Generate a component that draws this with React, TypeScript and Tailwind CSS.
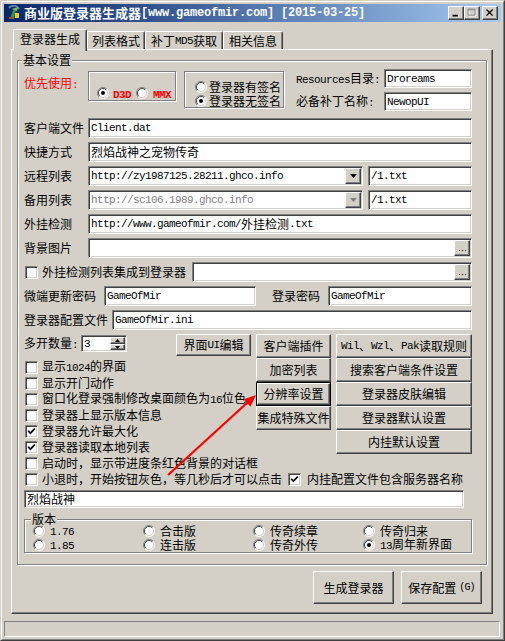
import React from 'react';

// classic win2000 bevels
const SUNK =
  "bg-white border border-t-[#808080] border-l-[#808080] border-b-white border-r-white shadow-[inset_1px_1px_0_#404040,inset_-1px_-1px_0_#d4d0c8]";
const RAISED =
  "bg-[#d4d0c8] border border-t-white border-l-white border-b-[#404040] border-r-[#404040] shadow-[inset_-1px_-1px_0_#808080]";
const ETCH = "border border-[#808080] shadow-[inset_1px_1px_0_#fff,1px_1px_0_#fff]";

// ascii runs get the narrow mono face, cjk stays at 12px
function T({ s }: { s: string }) {
  const parts = s.split(/([\x20-\x7e]+)/).filter((p) => p.length > 0);
  return (
    <>
      {parts.map((p, i) =>
        /^[\x20-\x7e]+$/.test(p) ? (
          <span key={i} className="font-['Liberation_Mono',monospace] text-[11px] tracking-[-0.6px] whitespace-pre">
            {p}
          </span>
        ) : (
          <span key={i}>{p}</span>
        )
      )}
    </>
  );
}

function Edit({ className = '', children, grey }: { className?: string; children?: React.ReactNode; grey?: boolean }) {
  return (
    <div className={`${SUNK} flex items-center pl-[2px] overflow-hidden whitespace-nowrap shrink-0 ${grey ? 'text-[#808080]' : ''} ${className}`}>
      {children}
    </div>
  );
}

function Dots() {
  return (
    <div className={`${RAISED} w-[16px] h-[16px] ml-auto shrink-0 flex items-end justify-center pb-[4px]`}>
      <svg width="7" height="1" viewBox="0 0 7 1">
        <rect x="0" y="0" width="1" height="1" fill="#000" />
        <rect x="3" y="0" width="1" height="1" fill="#000" />
        <rect x="6" y="0" width="1" height="1" fill="#000" />
      </svg>
    </div>
  );
}

function DropBtn({ grey }: { grey?: boolean }) {
  return (
    <div className={`${RAISED} w-[16px] h-[16px] ml-auto shrink-0 flex items-center justify-center`}>
      <svg width="7" height="4" viewBox="0 0 7 4">
        <path d="M0 0 H7 L3.5 4 Z" fill={grey ? '#808080' : '#000'} />
      </svg>
    </div>
  );
}

function Check({ on }: { on?: boolean }) {
  return (
    <div className={`${SUNK} w-[13px] h-[13px] shrink-0 flex items-center justify-center`}>
      {on && (
        <svg width="9" height="9" viewBox="0 0 9 9">
          <path d="M1.2 3.8 L3.4 6.2 L7.8 1.6" fill="none" stroke="#000" strokeWidth="1.7" />
        </svg>
      )}
    </div>
  );
}

function Radio({ on }: { on?: boolean }) {
  return (
    <svg width="12" height="12" viewBox="0 0 12 12" className="shrink-0">
      <circle cx="6" cy="6" r="5" fill="#fff" />
      <path d="M9.9 2.1 A5.5 5.5 0 0 0 2.1 9.9" fill="none" stroke="#808080" strokeWidth="1" />
      <path d="M9.2 2.8 A4.5 4.5 0 0 0 2.8 9.2" fill="none" stroke="#404040" strokeWidth="1" />
      <path d="M2.1 9.9 A5.5 5.5 0 0 0 9.9 2.1" fill="none" stroke="#fff" strokeWidth="1" />
      <path d="M2.8 9.2 A4.5 4.5 0 0 0 9.2 2.8" fill="none" stroke="#d4d0c8" strokeWidth="1" />
      {on && <circle cx="6" cy="6" r="2" fill="#000" />}
    </svg>
  );
}

function Btn({ className = '', children }: { className?: string; children: React.ReactNode }) {
  return (
    <div className={`${RAISED} flex items-center justify-center whitespace-nowrap shrink-0 ${className}`}>{children}</div>
  );
}

function CheckRow({ text, on }: { text: string; on?: boolean }) {
  return (
    <div className="h-[16px] flex items-center whitespace-nowrap">
      <div className="ml-[1px]">
        <Check on={on} />
      </div>
      <span className="ml-[4px]">
        <T s={text} />
      </span>
    </div>
  );
}

function VerRadio({ text, on }: { text: string; on?: boolean }) {
  return (
    <div className="w-[110px] h-[14px] flex items-center shrink-0 whitespace-nowrap leading-[12px]">
      <Radio on={on} />
      <span className="ml-[5px]">
        <T s={text} />
      </span>
    </div>
  );
}

function AppIcon() {
  return (
    <svg width="16" height="16" viewBox="0 0 16 16" className="shrink-0">
      <path d="M3 3 A6 6 0 0 1 13 4" fill="none" stroke="#5a7fa0" strokeWidth="2" />
      <path d="M4 14 L7 5 L10 5 L8 14 Z" fill="#2f8f3a" />
      <path d="M6 4 L12 2 L11 6 Z" fill="#7fc04a" />
      <rect x="9" y="8" width="4" height="5" fill="#e8c830" />
      <rect x="3" y="12" width="3" height="2" fill="#c83a2a" />
    </svg>
  );
}

function CapBtn({ kind }: { kind: 'min' | 'max' | 'close' }) {
  return (
    <div className={`${RAISED} w-[16px] h-[14px] flex items-center justify-center`}>
      {kind === 'min' && (
        <svg width="16" height="14" viewBox="0 0 16 14">
          <rect x="4" y="9" width="6" height="2" fill="#000" />
        </svg>
      )}
      {kind === 'max' && (
        <svg width="16" height="14" viewBox="0 0 16 14">
          <path d="M4.5 3.5 H12.5 V10.5 H4.5 Z" fill="none" stroke="#fff" />
          <path d="M3.5 2.5 H11.5 V9.5 H3.5 Z M3.5 3.5 H11.5" fill="none" stroke="#808080" />
        </svg>
      )}
      {kind === 'close' && (
        <svg width="16" height="14" viewBox="0 0 16 14">
          <path d="M4 3 L11 10 M11 3 L4 10" stroke="#000" strokeWidth="1.6" />
        </svg>
      )}
    </div>
  );
}

export default function App() {
  return (
    <div className="relative w-[505px] h-[641px] bg-[#d4d0c8] border border-t-[#d4d0c8] border-l-[#d4d0c8] border-b-[#404040] border-r-[#404040] font-['Noto_Sans_CJK_SC',sans-serif] text-[12px] leading-[14px] text-black select-none">
      <div className="h-full border border-t-white border-l-white border-b-[#808080] border-r-[#808080] p-[2px] flex flex-col">
        {/* title bar */}
        <div className="h-[18px] shrink-0 flex items-center bg-linear-to-r from-[#0a246a] to-[#a6caf0] pl-[2px] pr-[3px]">
          <AppIcon />
          <div className="ml-[2px] text-white font-bold whitespace-nowrap flex items-center">
            <span className="text-[13px]">商业版登录器生成器</span>
            <span className="font-['Liberation_Mono',monospace] text-[12px] tracking-[-0.2px] whitespace-pre">
              [www.gameofmir.com] [2015-03-25]
            </span>
          </div>
          <div className="ml-auto flex items-center">
            <CapBtn kind="min" />
            <CapBtn kind="max" />
            <div className="ml-[2px]">
              <CapBtn kind="close" />
            </div>
          </div>
        </div>

        {/* tabs */}
        <div className="mt-[7px] h-[20px] shrink-0 flex items-end pl-[9px]">
          <div className="relative z-10 w-[74px] h-[22px] -mb-[2px] bg-[#d4d0c8] border-t border-l border-r border-t-white border-l-white border-r-[#404040] shadow-[inset_-1px_0_0_#808080] rounded-t-[2px] flex items-center justify-center pb-[3px]">
            登录器生成
          </div>
          <div className="w-[58px] h-[18px] border-t border-l border-r border-t-white border-l-white border-r-[#404040] shadow-[inset_-1px_0_0_#808080] rounded-t-[2px] flex items-center justify-center">
            列表格式
          </div>
          <div className="w-[78px] h-[18px] border-t border-l border-r border-t-white border-l-white border-r-[#404040] shadow-[inset_-1px_0_0_#808080] rounded-t-[2px] flex items-center justify-center">
            <T s="补丁MD5获取" />
          </div>
          <div className="w-[60px] h-[18px] border-t border-l border-r border-t-white border-l-white border-r-[#404040] shadow-[inset_-1px_0_0_#808080] rounded-t-[2px] flex items-center justify-center">
            相关信息
          </div>
        </div>

        {/* tab page */}
        <div className="ml-[7px] w-[482px] h-[565px] shrink-0 border border-t-white border-l-white border-b-[#404040] border-r-[#404040] shadow-[inset_-1px_-1px_0_#808080] flex flex-col">
          <div className={`relative ml-[5px] mt-[10px] w-[470px] h-[505px] shrink-0 ${ETCH} pt-[8px] pl-[6px]`}>
            <span className="absolute left-[4px] -top-[8px] px-[1px] bg-[#d4d0c8]">基本设置</span>

            {/* row A */}
            <div className="h-[42px] flex items-start">
              <div className="w-[64px] pt-[7px] text-[#ff0000] whitespace-nowrap">
                <T s="优先使用:" />
              </div>
              <div className={`mt-[2px] w-[88px] h-[30px] ${ETCH} pt-[15px] pl-[8px] flex items-start`}>
                <Radio on />
                <span className="ml-[4px] text-[#ff0000] font-bold leading-[12px]">
                  <T s="D3D" />
                </span>
                <span className="ml-[5px]">
                  <Radio />
                </span>
                <span className="ml-[5px] text-[#ff0000] font-bold leading-[12px]">
                  <T s="MMX" />
                </span>
              </div>
              <div className={`ml-[8px] mt-[2px] w-[100px] h-[37px] ${ETCH} pt-[8px] pl-[10px] flex flex-col`}>
                <div className="h-[14px] flex items-center whitespace-nowrap">
                  <Radio />
                  <span className="ml-[2px]">登录器有签名</span>
                </div>
                <div className="h-[15px] flex items-center whitespace-nowrap">
                  <Radio on />
                  <span className="ml-[2px]">登录器无签名</span>
                </div>
              </div>
              <div className="ml-[12px] flex flex-col">
                <div className="h-[19px] flex items-center">
                  <div className="w-[88px] whitespace-nowrap">
                    <T s="Resources目录:" />
                  </div>
                  <Edit className="w-[88px] h-[19px]">
                    <T s="Droreams" />
                  </Edit>
                </div>
                <div className="mt-[4px] h-[19px] flex items-center">
                  <div className="w-[88px] whitespace-nowrap">
                    <T s="必备补丁名称:" />
                  </div>
                  <Edit className="w-[88px] h-[19px]">
                    <T s="NewopUI" />
                  </Edit>
                </div>
              </div>
            </div>

            {/* text rows */}
            <div className="mt-[7px] h-[20px] flex items-center">
              <div className="w-[64px]">客户端文件</div>
              <Edit className="w-[384px] h-[20px]">
                <T s="Client.dat" />
              </Edit>
            </div>
            <div className="mt-[4px] h-[20px] flex items-center">
              <div className="w-[64px]">快捷方式</div>
              <Edit className="w-[384px] h-[20px]">烈焰战神之宠物传奇</Edit>
            </div>
            <div className="mt-[4px] h-[20px] flex items-center">
              <div className="w-[64px]">远程列表</div>
              <Edit className="w-[275px] h-[20px] pr-[1px]">
                <T s="http://zy1987125.28211.ghco.info" />
                <DropBtn />
              </Edit>
              <Edit className="ml-[5px] w-[104px] h-[20px]">
                <T s="/1.txt" />
              </Edit>
            </div>
            <div className="mt-[4px] h-[20px] flex items-center">
              <div className="w-[64px]">备用列表</div>
              <Edit className="w-[275px] h-[20px] pr-[1px]" grey>
                <T s="http://sc106.1989.ghco.info" />
                <DropBtn grey />
              </Edit>
              <Edit className="ml-[5px] w-[104px] h-[20px]">
                <T s="/1.txt" />
              </Edit>
            </div>
            <div className="mt-[4px] h-[20px] flex items-center">
              <div className="w-[64px]">外挂检测</div>
              <Edit className="w-[384px] h-[20px]">
                <T s="http://www.gameofmir.com/外挂检测.txt" />
              </Edit>
            </div>
            <div className="mt-[4px] h-[20px] flex items-center">
              <div className="w-[64px]">背景图片</div>
              <Edit className="w-[384px] h-[20px] pr-[1px]">
                <Dots />
              </Edit>
            </div>
            <div className="mt-[4px] h-[20px] flex items-center">
              <div className="ml-[1px]">
                <Check />
              </div>
              <span className="ml-[4px] whitespace-nowrap">外挂检测列表集成到登录器</span>
              <Edit className="ml-auto mr-[14px] w-[280px] h-[20px] pr-[1px]">
                <Dots />
              </Edit>
            </div>
            <div className="mt-[4px] h-[20px] flex items-center">
              <div className="w-[80px] whitespace-nowrap">微端更新密码</div>
              <Edit className="w-[152px] h-[20px]">
                <T s="GameOfMir" />
              </Edit>
              <div className="ml-[16px] w-[56px] whitespace-nowrap">登录密码</div>
              <Edit className="w-[144px] h-[20px]">
                <T s="GameOfMir" />
              </Edit>
            </div>
            <div className="mt-[4px] h-[20px] flex items-center">
              <div className="w-[88px] whitespace-nowrap">登录器配置文件</div>
              <Edit className="w-[360px] h-[20px]">
                <T s="GameOfMir.ini" />
              </Edit>
            </div>

            {/* options + buttons */}
            <div className="mt-[4px] h-[121px] flex items-start">
              <div className="w-[227px] flex flex-col">
                <div className="h-[25px] flex items-start">
                  <div className="w-[57px] mt-[2px] whitespace-nowrap">
                    <T s="多开数量:" />
                  </div>
                  <Edit className="mt-[1px] w-[46px] h-[17px] pr-[1px]">
                    <T s="3" />
                    <div className="ml-auto flex flex-col">
                      <div className={`${RAISED} w-[15px] h-[7px] flex items-center justify-center`}>
                        <svg width="5" height="3" viewBox="0 0 5 3">
                          <path d="M0 3 H5 L2.5 0 Z" fill="#000" />
                        </svg>
                      </div>
                      <div className={`${RAISED} w-[15px] h-[6px] flex items-center justify-center`}>
                        <svg width="5" height="3" viewBox="0 0 5 3">
                          <path d="M0 0 H5 L2.5 3 Z" fill="#000" />
                        </svg>
                      </div>
                    </div>
                  </Edit>
                  <Btn className="ml-auto w-[75px] h-[22px]">
                    <T s="界面UI编辑" />
                  </Btn>
                </div>
                <CheckRow text="显示1024的界面" />
                <CheckRow text="显示开门动作" />
                <CheckRow text="窗口化登录强制修改桌面颜色为16位色" />
                <CheckRow text="登录器上显示版本信息" />
                <CheckRow text="登录器允许最大化" on />
                <CheckRow text="登录器读取本地列表" on />
              </div>
              <div className="ml-[5px] w-[75px] flex flex-col">
                <Btn className="h-[24px]">客户端插件</Btn>
                <Btn className="h-[24px]">加密列表</Btn>
                <div className="h-[24px] border border-black">
                  <Btn className="h-full">分辨率设置</Btn>
                </div>
                <Btn className="h-[24px]">集成特殊文件</Btn>
              </div>
              <div className="ml-[5px] w-[136px] flex flex-col">
                <Btn className="h-[24px]">
                  <T s="Wil、Wzl、Pak读取规则" />
                </Btn>
                <Btn className="h-[24px]">搜索客户端条件设置</Btn>
                <Btn className="h-[24px]">登录器皮肤编辑</Btn>
                <Btn className="h-[24px]">登录器默认设置</Btn>
                <Btn className="h-[24px]">内挂默认设置</Btn>
              </div>
            </div>
            <CheckRow text="启动时，显示带进度条红色背景的对话框" />
            <div className="h-[16px] flex items-center whitespace-nowrap">
              <div className="ml-[1px]">
                <Check />
              </div>
              <span className="ml-[4px]">小退时，开始按钮灰色，等几秒后才可以点击</span>
              <div className="ml-[6px]">
                <Check on />
              </div>
              <span className="ml-[6px]">内挂配置文件包含服务器名称</span>
            </div>
            <Edit className="mt-[3px] w-[440px] h-[18px]">烈焰战神</Edit>

            {/* version */}
            <div className={`relative mt-[11px] w-[448px] h-[34px] ${ETCH} pt-[4px] pl-[8px]`}>
              <span className="absolute left-[6px] -top-[8px] px-[1px] bg-[#d4d0c8]">版本</span>
              <div className="flex">
                <VerRadio text="1.76" />
                <VerRadio text="合击版" />
                <VerRadio text="传奇续章" />
                <VerRadio text="传奇归来" />
              </div>
              <div className="flex">
                <VerRadio text="1.85" />
                <VerRadio text="连击版" />
                <VerRadio text="传奇外传" />
                <VerRadio text="13周年新界面" on />
              </div>
            </div>
          </div>

          <div className="mt-[6px] flex justify-end gap-[7px] pr-[10px]">
            <Btn className="w-[81px] h-[33px]">生成登录器</Btn>
            <Btn className="w-[81px] h-[33px]">
              保存配置
              <span className="ml-[3px] font-['Liberation_Mono',monospace] text-[10px] tracking-[-0.8px]">(G)</span>
            </Btn>
          </div>
        </div>

        {/* status bar */}
        <div className="mt-[7px] h-[16px] shrink-0 mr-[1px] border border-t-[#808080] border-l-[#808080] border-b-white border-r-white" />
      </div>

      {/* red annotation arrow */}
      <svg className="absolute left-0 top-0 pointer-events-none" width="505" height="641" viewBox="0 0 505 641">
        <line x1="167" y1="474" x2="247" y2="401" stroke="#ff0000" strokeWidth="2.2" />
        <polygon points="255,394 249.4,405.7 242.8,398.3" fill="#ff0000" />
      </svg>
    </div>
  );
}
